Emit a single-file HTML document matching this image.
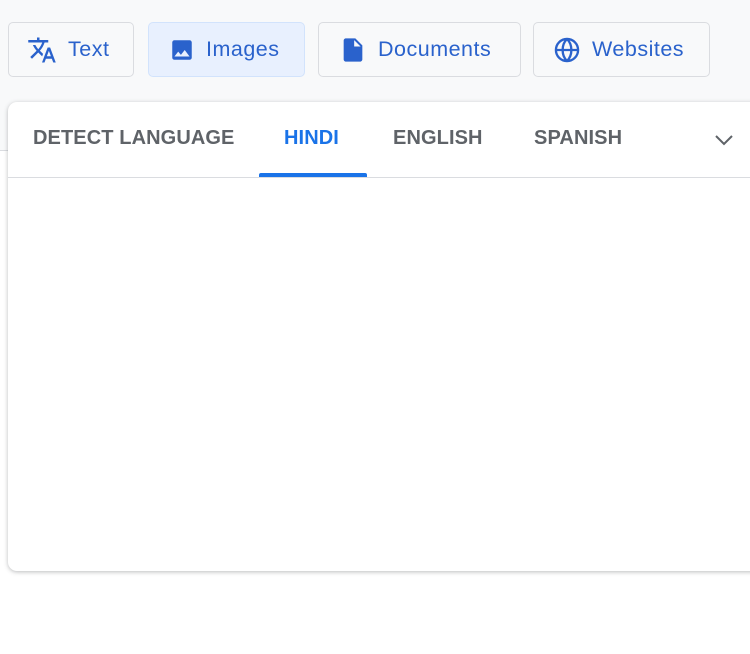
<!DOCTYPE html>
<html><head><style>
body{margin:0;width:750px;height:654px;overflow:hidden;background:#fff;font-family:"Liberation Sans",sans-serif;position:relative}
.top{position:absolute;left:0;top:0;width:750px;height:150px;background:#f8f9fa;border-bottom:1px solid #dadce0}
.btn{position:absolute;top:22px;height:55px;border:1px solid #dadce0;border-radius:5px;background:#f8f9fa;box-sizing:border-box;color:#2a62cc;font-size:21.5px;letter-spacing:.5px;display:flex;align-items:center}
.btn svg{margin-right:11px}
.card{position:absolute;left:8px;top:102px;width:760px;height:469px;background:#fff;border-radius:9px;box-shadow:0 1px 4px rgba(60,64,67,.35)}
.tabs{position:absolute;left:0;top:0;width:100%;height:75px;border-bottom:1px solid #dadce0}
.tab{position:absolute;top:25px;font-size:20px;font-weight:bold;color:#5f6368;letter-spacing:.1px}
</style></head><body>
<div class="top"></div>
<div class="btn" style="left:8px;width:126px;padding-left:18px">
<svg width="30" height="30" viewBox="0 0 24 24"><path fill="#2a62cc" d="M12.87 15.07l-2.54-2.51.03-.03A17.5 17.5 0 0014.07 6H17V4h-7V2H8v2H1v2h11.17C11.5 7.92 10.44 9.75 9 11.35 8.07 10.32 7.3 9.19 6.69 8h-2c.73 1.63 1.73 3.17 2.98 4.56l-5.09 5.02L4 19l5-5 3.11 3.11.76-2.04zM18.5 10h-2L12 22h2l1.12-3h4.75L21 22h2l-4.5-12zm-2.62 7l1.62-4.33L19.12 17h-3.24z"/></svg>Text</div>
<div class="btn" style="left:148px;width:157px;padding-left:20px;background:#e8f0fe;border-color:#d2e3fc">
<svg width="26" height="26" viewBox="0 0 24 24"><path fill="#2a62cc" d="M21 19V5c0-1.1-.9-2-2-2H5c-1.1 0-2 .9-2 2v14c0 1.1.9 2 2 2h14c1.1 0 2-.9 2-2zM8.5 13.5l2.5 3 3.5-4.5 4.5 6H5l3.5-4.5z"/></svg>Images</div>
<div class="btn" style="left:318px;width:203px;padding-left:20px">
<svg width="28" height="28" viewBox="0 0 24 24"><path fill="#2a62cc" d="M14 2H6c-1.1 0-2 .9-2 2v16c0 1.1.9 2 2 2h12c1.1 0 2-.9 2-2V8l-6-6zm-1 7V3.5L18.5 9H13z"/></svg>Documents</div>
<div class="btn" style="left:533px;width:177px;padding-left:19px">
<svg width="28" height="28" viewBox="0 0 24 24"><g fill="none" stroke="#2a62cc" stroke-width="2"><circle cx="12" cy="12" r="9.5"/><path d="M2.5 12h19M12 2.5c-5 5-5 14 0 19M12 2.5c5 5 5 14 0 19"/></g></svg>Websites</div>
<div class="card">
<div class="tabs">
<div class="tab" style="left:25px">DETECT LANGUAGE</div>
<div class="tab" style="left:276px;color:#1a73e8">HINDI</div>
<div style="position:absolute;left:251px;top:71px;width:108px;height:4px;background:#1a73e8;border-radius:2px 2px 0 0"></div>
<div class="tab" style="left:385px">ENGLISH</div>
<div class="tab" style="left:526px">SPANISH</div>
<svg style="position:absolute;left:705px;top:29px" width="22" height="18" viewBox="0 0 22 18"><path d="M3 5l8 8 8-8" fill="none" stroke="#5f6368" stroke-width="2"/></svg>
</div>
</div>
</body></html>
